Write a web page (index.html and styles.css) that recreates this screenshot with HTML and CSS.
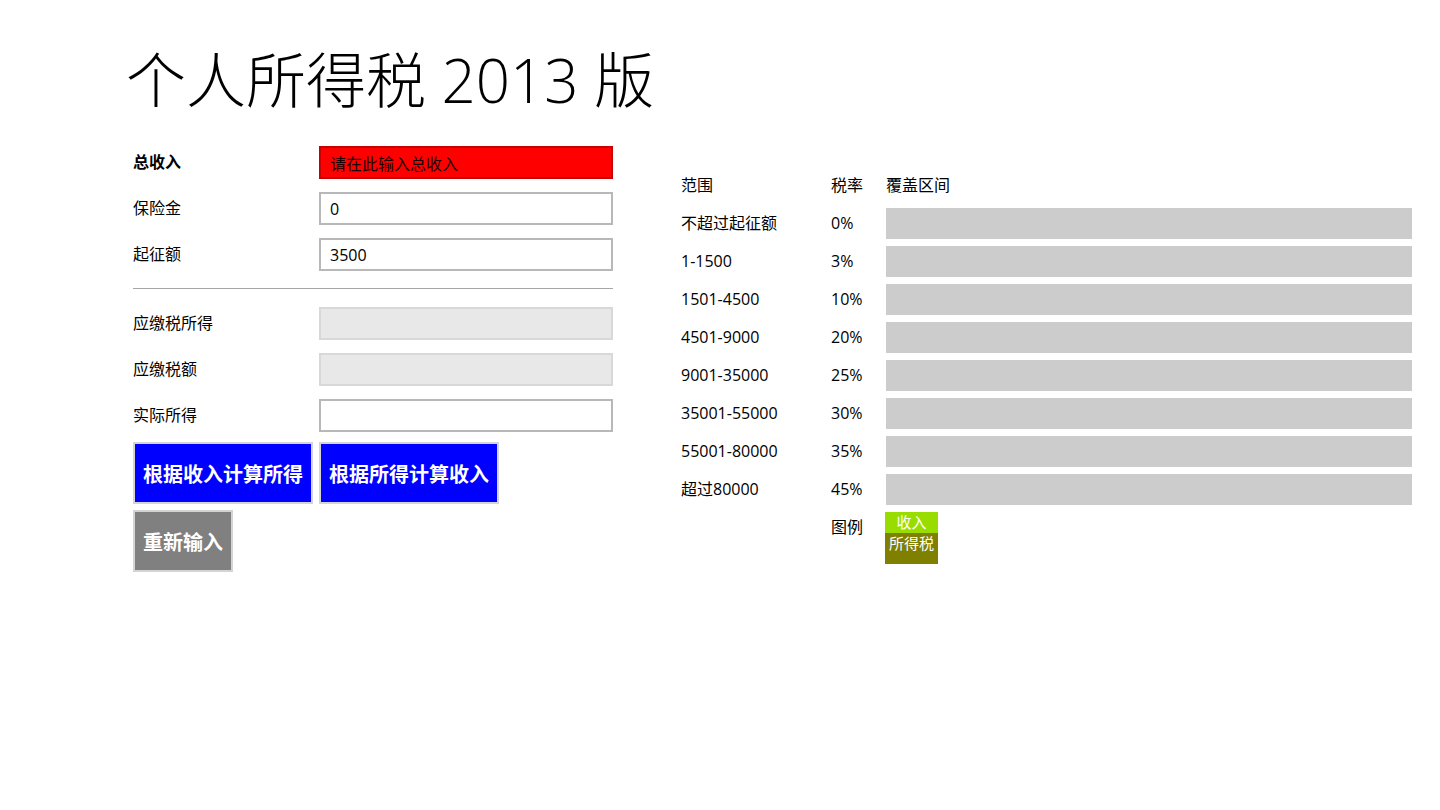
FILE: index.html
```html
<!DOCTYPE html>
<html lang="zh-CN">
<head>
    <meta charset="UTF-8">
    <meta name="viewport" content="width=device-width, initial-scale=1.0">
    <title>个人所得税 2013 版</title>
    <link rel="stylesheet" href="styles.css">
</head>
<body>
    <h1 class="page-title">个人所得税 2013 版</h1>

    <div class="main">
        <div class="calc">
            <div class="form-row">
                <label for="income" class="strong">总收入</label>
                <input type="text" id="income" class="field field-error" value="请在此输入总收入">
            </div>
            <div class="form-row">
                <label for="insurance">保险金</label>
                <input type="text" id="insurance" class="field" value="0">
            </div>
            <div class="form-row">
                <label for="threshold">起征额</label>
                <input type="text" id="threshold" class="field" value="3500">
            </div>

            <hr class="divider">

            <div class="form-row">
                <label for="taxable">应缴税所得</label>
                <input type="text" id="taxable" class="field" disabled>
            </div>
            <div class="form-row">
                <label for="tax">应缴税额</label>
                <input type="text" id="tax" class="field" disabled>
            </div>
            <div class="form-row">
                <label for="net">实际所得</label>
                <input type="text" id="net" class="field">
            </div>

            <div class="actions">
                <button class="btn btn-blue">根据收入计算所得</button>
                <button class="btn btn-blue">根据所得计算收入</button>
            </div>
            <div class="actions">
                <button class="btn btn-gray">重新输入</button>
            </div>
        </div>

        <div class="rates">
            <div class="rate-row rate-head">
                <span>范围</span>
                <span>税率</span>
                <span>覆盖区间</span>
            </div>
            <div class="rate-row"><span>不超过起征额</span><span>0%</span><div class="bar"></div></div>
            <div class="rate-row"><span>1-1500</span><span>3%</span><div class="bar"></div></div>
            <div class="rate-row"><span>1501-4500</span><span>10%</span><div class="bar"></div></div>
            <div class="rate-row"><span>4501-9000</span><span>20%</span><div class="bar"></div></div>
            <div class="rate-row"><span>9001-35000</span><span>25%</span><div class="bar"></div></div>
            <div class="rate-row"><span>35001-55000</span><span>30%</span><div class="bar"></div></div>
            <div class="rate-row"><span>55001-80000</span><span>35%</span><div class="bar"></div></div>
            <div class="rate-row"><span>超过80000</span><span>45%</span><div class="bar"></div></div>
            <div class="rate-row legend-row">
                <span></span>
                <span>图例</span>
                <div class="legend">
                    <div class="legend-income">收入</div>
                    <div class="legend-tax">所得税</div>
                </div>
            </div>
        </div>
    </div>
</body>
</html>
```

FILE: styles.css
```css
* {
    margin: 0;
    padding: 0;
    box-sizing: border-box;
    font-family: 'Open Sans', 'Noto Sans CJK SC', sans-serif;
}

body {
    background-color: #fff;
    color: #000;
    font-size: 16px;
}

.page-title {
    font-size: 60px;
    font-weight: 300;
    line-height: 60px;
    margin: 50px 0 0 126px;
}

.main {
    display: flex;
    margin-top: 36px;
    padding-left: 133px;
}

/* left side: calculator form */
.calc {
    width: 480px;
}

.form-row {
    display: flex;
    align-items: center;
    height: 33px;
    margin-bottom: 13px;
}

.form-row label {
    width: 186px;
    line-height: 33px;
}

.form-row label.strong {
    font-weight: bold;
}

.field {
    width: 294px;
    height: 33px;
    padding: 0 9px;
    border: 2px solid #b8b8b8;
    background-color: #fff;
    font-size: 16px;
    color: #000;
    outline: none;
}

.field-error {
    background-color: #ff0000;
    border-color: #c80000;
    color: #1a0000;
}

.field:disabled {
    background-color: #e8e8e8;
    border-color: #d8d8d8;
}

/* margin-top collapses with the row above */
.divider {
    border: none;
    border-top: 1px solid #a6a6a6;
    margin: 17px 0 18px;
}

.form-row + .actions {
    margin-top: -3px;
}

.actions {
    display: flex;
    gap: 6px;
    margin-bottom: 6px;
}

.btn {
    height: 62px;
    padding: 0 8px;
    border: 2px solid #d4d4d4;
    color: #fff;
    font-size: 20px;
    font-weight: bold;
    cursor: pointer;
}

.btn-blue {
    background-color: #0000ff;
}

.btn-gray {
    background-color: #808080;
}

/* right side: tax bracket table */
.rates {
    margin-left: 68px;
    padding-top: 24px;
}

.rate-row {
    display: grid;
    grid-template-columns: 150px 55px 526px;
    align-items: center;
    min-height: 31px;
    margin-bottom: 7px;
}

.rate-row span {
    line-height: 31px;
}

.bar {
    height: 31px;
    background-color: #cccccc;
}

.legend-row {
    align-items: start;
}

.legend {
    width: 53px;
    color: #fff;
    text-align: center;
    font-size: 15px;
    margin-left: -1px;
}

.legend-income {
    height: 21px;
    line-height: 21px;
    background-color: #99dd00;
}

.legend-tax {
    height: 31px;
    line-height: 20px;
    background-color: #808000;
}
```
